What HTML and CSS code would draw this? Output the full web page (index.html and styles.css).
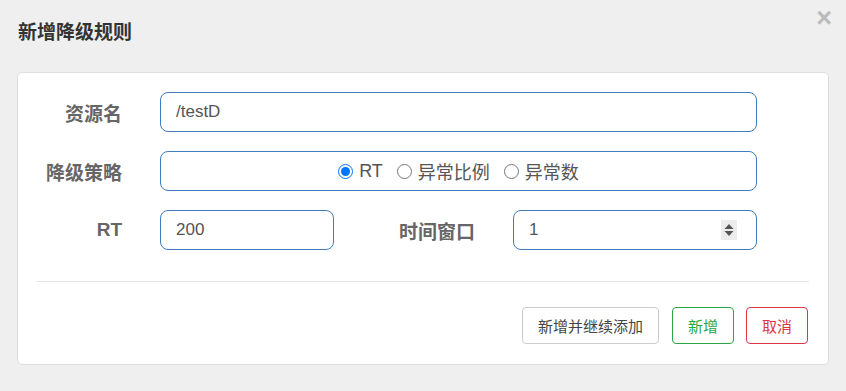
FILE: index.html
```html
<!DOCTYPE html>
<html lang="zh-CN">

<head>
  <meta charset="UTF-8">
  <meta name="viewport" content="width=device-width, initial-scale=1.0">
  <title>新增降级规则</title>
  <link rel="stylesheet" href="styles.css">
</head>

<body>
  <div class="dialog">
    <div class="dialog-header">
      <h4 class="dialog-title">新增降级规则</h4>
      <span class="close">&times;</span>
    </div>
    <div class="panel">
      <form class="rule-form">
        <div class="form-row">
          <label class="label">资源名</label>
          <input type="text" class="text-input" value="/testD">
        </div>
        <div class="form-row">
          <label class="label">降级策略</label>
          <div class="text-input radio-box">
            <label class="radio"><input type="radio" name="grade" checked> RT</label>
            <label class="radio"><input type="radio" name="grade"> 异常比例</label>
            <label class="radio"><input type="radio" name="grade"> 异常数</label>
          </div>
        </div>
        <div class="form-row">
          <label class="label">RT</label>
          <input type="text" class="text-input short" value="200">
          <label class="label wide">时间窗口</label>
          <div class="text-input number-box">
            <input type="text" class="plain-input" value="1">
            <span class="spinner">
              <svg width="10" height="14" viewBox="0 0 10 14">
                <path d="M5 1 L9.5 6 L0.5 6 Z" fill="#555" />
                <path d="M5 13 L9.5 8 L0.5 8 Z" fill="#555" />
              </svg>
            </span>
          </div>
        </div>
      </form>
      <div class="divider"></div>
      <div class="actions">
        <button class="btn btn-default">新增并继续添加</button>
        <button class="btn btn-success">新增</button>
        <button class="btn btn-danger">取消</button>
      </div>
    </div>
  </div>
</body>

</html>
```

FILE: styles.css
```css
html,
body {
  margin: 0;
  padding: 0;
}

body {
  font-family: "Liberation Sans", "Noto Sans CJK SC", sans-serif;
  background-color: #efefef;
  width: 846px;
  height: 391px;
  overflow: hidden;
}

.dialog {
  padding: 0 14px 0 17px;
}

.dialog-header {
  display: flex;
  justify-content: space-between;
  align-items: flex-start;
  height: 72px;
}

.dialog-title {
  margin: 21px 0 0 1px;
  font-size: 19px;
  font-weight: bold;
  color: #333;
  line-height: 24px;
}

.close {
  margin-top: 4px;
  font-size: 27px;
  font-weight: bold;
  color: #bbb;
  line-height: 28px;
}

.panel {
  width: 772px;
  background-color: white;
  border: 1px solid #ddd;
  border-radius: 5px;
  padding: 19px 19px 20px;
}

.rule-form {
  padding-right: 52px;
}

.form-row {
  display: flex;
  align-items: center;
  height: 40px;
  margin-bottom: 19px;
}

.form-row:last-child {
  margin-bottom: 0;
}

.label {
  width: 85px;
  margin-right: 38px;
  text-align: right;
  font-size: 19px;
  font-weight: bold;
  color: #666;
  flex-shrink: 0;
  white-space: nowrap;
}

.label.wide {
  width: 141px;
  margin-right: 38px;
}

.text-input {
  flex: 1;
  min-width: 0;
  height: 40px;
  box-sizing: border-box;
  border: 1px solid #3d7dbf;
  border-radius: 8px;
  padding: 0 15px;
  font-family: "Liberation Sans", "Noto Sans CJK SC", sans-serif;
  font-size: 17px;
  color: #555;
  background-color: white;
  outline: none;
}

.text-input.short {
  flex: 0 0 174px;
  width: 174px;
}

.radio-box {
  display: flex;
  justify-content: center;
  align-items: center;
  gap: 14px;
}

.radio {
  display: flex;
  align-items: center;
  gap: 6px;
  font-size: 18px;
  color: #555;
}

.radio input {
  width: 15px;
  height: 15px;
  margin: 0;
}

.number-box {
  display: flex;
  align-items: center;
  padding-right: 19px;
}

.plain-input {
  flex: 1;
  width: 0;
  min-width: 0;
  border: none;
  outline: none;
  padding: 0;
  font-family: "Liberation Sans", "Noto Sans CJK SC", sans-serif;
  font-size: 17px;
  color: #555;
}

.spinner {
  display: flex;
  align-items: center;
  justify-content: center;
  width: 16px;
  height: 20px;
  background-color: #ececec;
}

.divider {
  border-top: 1px solid #e5e5e5;
  margin-top: 31px;
}

.actions {
  display: flex;
  justify-content: flex-end;
  gap: 12px;
  margin-top: 25px;
  padding-right: 1px;
}

.btn {
  height: 37px;
  padding: 0 15px;
  font-family: "Liberation Sans", "Noto Sans CJK SC", sans-serif;
  font-size: 15px;
  color: #444;
  background-color: white;
  border: 1px solid #ccc;
  border-radius: 4px;
  cursor: pointer;
}

.btn-default {
  margin-right: 1px;
}

.btn-success {
  color: #28a745;
  border-color: #28a745;
}

.btn-danger {
  color: #dc3545;
  border-color: #dc3545;
}
```
